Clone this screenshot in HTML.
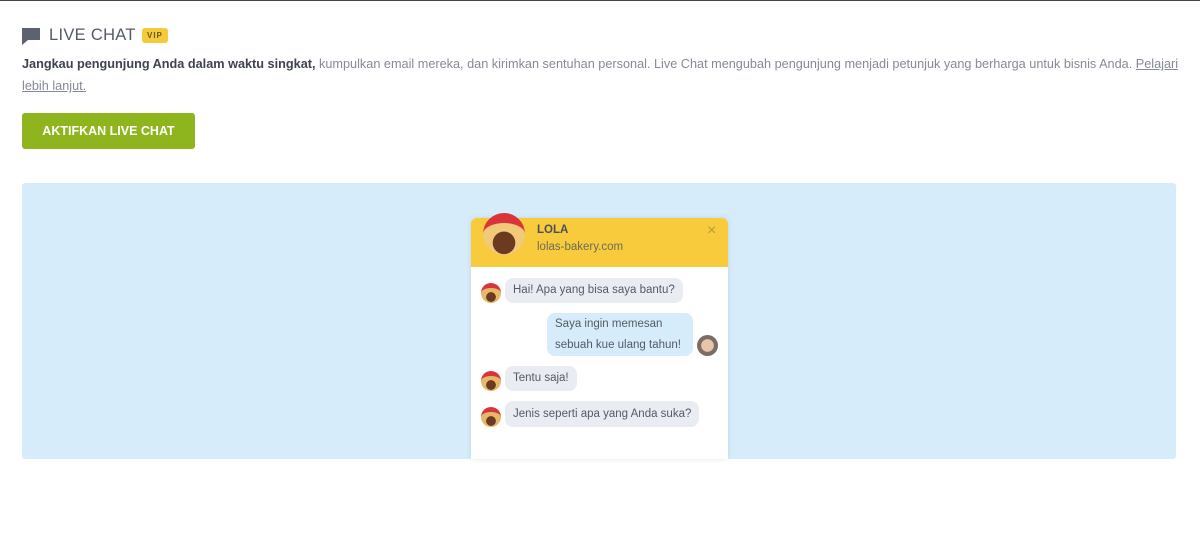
<!DOCTYPE html>
<html><head><meta charset="utf-8"><style>
*{margin:0;padding:0;box-sizing:border-box}
body{width:1200px;height:546px;background:#fff;font-family:"Liberation Sans",sans-serif;position:relative;overflow:hidden;border-top:1px solid #444}
.abs{position:absolute}
h1{position:absolute;left:49px;top:25px;font-size:16.5px;font-weight:normal;color:#545a66;letter-spacing:0.3px}
.vip{left:142px;top:27px;background:#f4c93a;color:#6a5a1a;font-size:8px;font-weight:bold;padding:3px 5px;border-radius:3px;letter-spacing:1px}
.p{left:22px;top:52px;width:1158px;font-size:12.7px;line-height:22px;color:#858a95}
.p b{color:#3e4350}
.p u{color:#858a95}
.btn{left:22px;top:112px;width:173px;height:36px;background:#8fb51e;border-radius:3px;color:#fff;font-weight:bold;font-size:12.5px;text-align:center;line-height:36px}
.box{left:22px;top:182px;width:1154px;height:276px;background:#d6ecfb;border-radius:3px}
.chat{left:471px;top:217px;width:257px;height:241px;background:#fff;border-radius:6px 6px 0 0;box-shadow:0 0 6px rgba(0,0,0,.1)}
.hd{height:49px;background:#f8cb3d;position:relative;border-radius:6px 6px 0 0}
.bub{position:absolute;font-size:11.5px;color:#555a66;border-radius:8px;padding:0 8px;line-height:21px;white-space:nowrap}
.g{background:#e9ecf3}
.av{position:absolute;width:20px;height:20px;border-radius:50%;background:radial-gradient(circle at 50% 60%,#6b3a20 35%,#e6b86a 37%);border-top:5px solid #d8343a}
</style></head><body>
<svg class="abs" style="left:22px;top:27px" width="18" height="17" viewBox="0 0 18 17"><path d="M0 0h18v12H6l-6 5z" fill="#5d6270"/></svg>
<h1>LIVE CHAT</h1>
<div class="abs vip">VIP</div>
<div class="abs p"><b>Jangkau pengunjung Anda dalam waktu singkat,</b> kumpulkan email mereka, dan kirimkan sentuhan personal. Live Chat mengubah pengunjung menjadi petunjuk yang berharga untuk bisnis Anda. <u>Pelajari lebih lanjut.</u></div>
<div class="abs btn">AKTIFKAN LIVE CHAT</div>
<div class="abs box"></div>
<div class="abs chat">
 <div class="hd">
  <div class="abs" style="left:12px;top:-5px;width:42px;height:42px;border-radius:50%;background:radial-gradient(circle at 50% 62%,#6b3a20 38%,#f2c879 40%);border-top:10px solid #d8343a"></div>
  <div class="abs" style="left:66px;top:6px;font-weight:bold;font-size:11.5px;color:#4a4f5a">LOLA</div>
  <div class="abs" style="left:66px;top:23px;font-size:11.5px;color:#6e6a58">lolas-bakery.com</div>
  <div class="abs" style="left:236px;top:4px;font-size:16px;color:#b89c3a">×</div>
 </div>
 <div class="av" style="left:10px;top:65px"></div>
 <div class="bub g" style="left:34px;top:60px;height:25px;line-height:25px">Hai! Apa yang bisa saya bantu?</div>
 <div class="bub" style="left:76px;top:95px;width:146px;height:43px;background:#d6ecfb;padding-top:1px">Saya ingin memesan<br>sebuah kue ulang tahun!</div>
 <div class="abs" style="left:226px;top:117px;width:21px;height:21px;border-radius:50%;background:radial-gradient(circle,#e8c4a8 40%,#7b6c66 45%)"></div>
 <div class="av" style="left:10px;top:153px"></div>
 <div class="bub g" style="left:34px;top:148px;height:25px;line-height:25px">Tentu saja!</div>
 <div class="av" style="left:10px;top:189px"></div>
 <div class="bub g" style="left:34px;top:183px;height:26px;line-height:26px">Jenis seperti apa yang Anda suka?</div>
</div>
</body></html>
